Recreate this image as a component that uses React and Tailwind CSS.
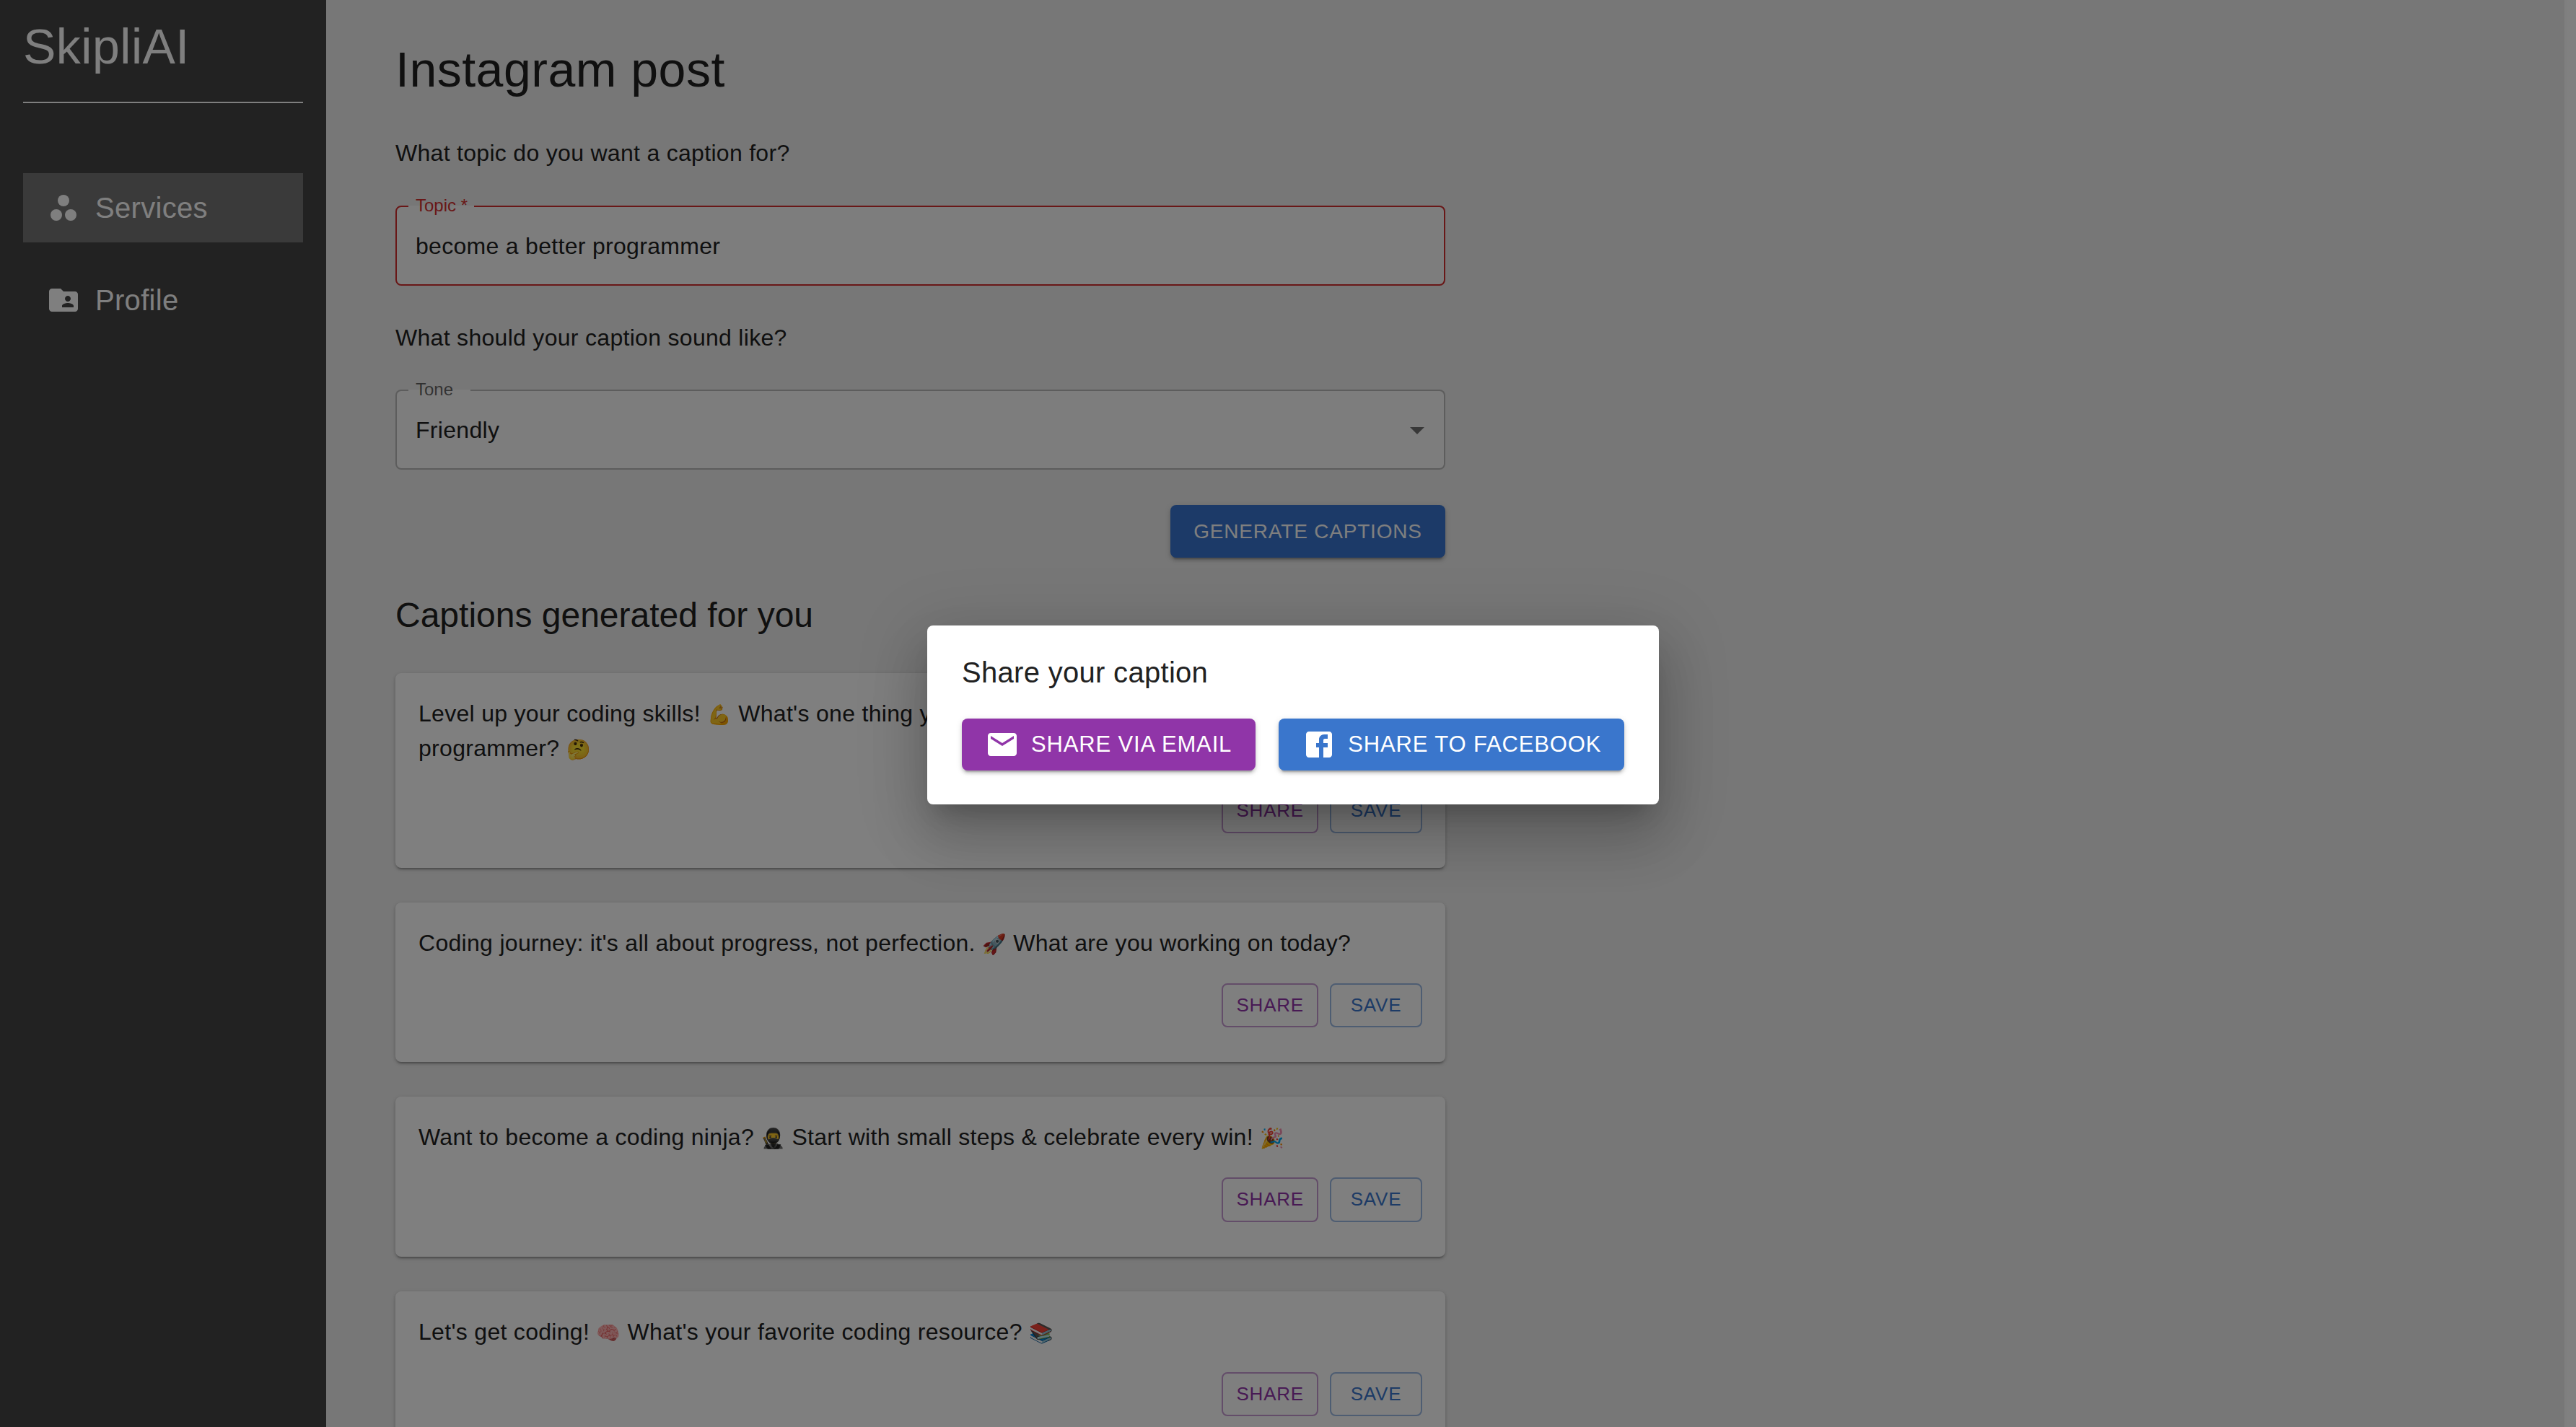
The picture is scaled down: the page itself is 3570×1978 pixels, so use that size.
import React from "react";

const FONT = "font-['Liberation_Sans',Arial,sans-serif]";

const captions = [
  "Level up your coding skills! 💪 What's one thing you're doing today to become a better programmer? 🤔",
  "Coding journey: it's all about progress, not perfection. 🚀 What are you working on today?",
  "Want to become a coding ninja? 🥷 Start with small steps & celebrate every win! 🎉",
  "Let's get coding! 🧠 What's your favorite coding resource? 📚",
];

const WorkspacesIcon = () => (
  <svg viewBox="0 0 24 24" className="w-12 h-12 fill-white">
    <circle cx="12" cy="7" r="4" />
    <circle cx="7" cy="17" r="4" />
    <circle cx="17" cy="17" r="4" />
  </svg>
);

const FolderSharedIcon = () => (
  <svg viewBox="0 0 24 24" className="w-12 h-12 fill-white">
    <path d="M20 6h-8l-2-2H4c-1.1 0-1.99.9-1.99 2L2 18c0 1.1.9 2 2 2h16c1.1 0 2-.9 2-2V8c0-1.1-.9-2-2-2zm-5 3c1.1 0 2 .9 2 2s-.9 2-2 2-2-.9-2-2 .9-2 2-2zm4 8h-8v-1c0-1.33 2.67-2 4-2s4 .67 4 2v1z" />
  </svg>
);

const EmailIcon = () => (
  <svg viewBox="0 0 24 24" className="w-12 h-12 fill-white">
    <path d="M20 4H4c-1.1 0-1.99.9-1.99 2L2 18c0 1.1.9 2 2 2h16c1.1 0 2-.9 2-2V6c0-1.1-.9-2-2-2zm0 4l-8 5-8-5V6l8 5 8-5v2z" />
  </svg>
);

const FacebookIcon = () => (
  <svg viewBox="0 0 24 24" className="w-12 h-12 fill-white">
    <path d="M19 3H5c-1.1 0-2 .9-2 2v14c0 1.1.9 2 2 2h7v-7h-2v-3h2V8.5C12 6.57 13.57 5 15.5 5H18v3h-2c-.55 0-1 .45-1 1v2h3v3h-3v7h4c1.1 0 2-.9 2-2V5c0-1.1-.9-2-2-2z" />
  </svg>
);

// the colour emoji font runs wider than the one in the screenshot, so emojis get a smaller size
const withEmoji = (text) =>
  text.split(/(\p{Extended_Pictographic})/u).map((part, i) =>
    i % 2 === 1 ? (
      <span key={i} className="text-[27px] leading-none tracking-normal">
        {part}
      </span>
    ) : (
      part
    )
  );

const CaptionCard = ({ text }) => (
  <div className="bg-white rounded-lg px-8 pt-8 pb-12 shadow-[0_4px_2px_-2px_rgba(0,0,0,0.2),0_2px_4px_0_rgba(0,0,0,0.14),0_2px_6px_0_rgba(0,0,0,0.12)]">
    <p className="text-[32px] leading-[48px] tracking-[0.3px] text-[#212121]">{withEmoji(text)}</p>
    <div className="flex justify-end gap-4 mt-8">
      <button className="h-[61.5px] px-[18px] min-w-[128px] rounded-lg border-2 border-[#9035a8]/50 text-[#9035a8] text-[26px] tracking-[0.8px]">
        SHARE
      </button>
      <button className="h-[61.5px] px-[18px] min-w-[128px] rounded-lg border-2 border-[#3a76cc]/50 text-[#3a76cc] text-[26px] tracking-[0.8px]">
        SAVE
      </button>
    </div>
  </div>
);

export default function App() {
  return (
    <div className={`${FONT} relative flex h-screen overflow-hidden bg-[#eeeeee]`}>
      <aside className="w-[452px] shrink-0 bg-[#444444] px-8 text-white">
        <div className="h-[143px] pt-6 border-b-2 border-white text-[68px] leading-[80px] tracking-[0.5px]">SkipliAI</div>
        <nav className="flex flex-col gap-8 mt-[97px]">
          <div className="flex items-center gap-5 h-24 pl-8 bg-[#747474] text-[40px] tracking-[0.3px]">
            <WorkspacesIcon />
            <span>Services</span>
          </div>
          <div className="flex items-center gap-5 h-24 pl-8 text-[40px] tracking-[0.3px]">
            <FolderSharedIcon />
            <span>Profile</span>
          </div>
        </nav>
      </aside>

      <main className="w-[1455px] ml-24 shrink-0 pt-[50px] text-[#212121]">
        <h1 className="text-[68px] leading-[92px] tracking-[0.5px]">Instagram post</h1>
        <p className="text-[32px] leading-[48px] tracking-[0.3px] mt-[46px]">What topic do you want a caption for?</p>

        <div className="relative mt-[49px] h-[111px] rounded-lg border-2 border-[#d32f2f] bg-[#fafafa] flex items-center px-[26px] text-[32px] tracking-[0.3px]">
          <span className="absolute -top-[15px] left-4 w-[91px] pl-[10px] bg-[linear-gradient(#eeeeee_50%,#fafafa_50%)] text-[24px] leading-[26px] tracking-normal text-[#d32f2f]">Topic *</span>
          become a better programmer
        </div>

        <p className="text-[32px] leading-[48px] tracking-[0.3px] mt-[48px]">What should your caption sound like?</p>

        <div className="relative mt-[48px] h-[111px] rounded-lg border-2 border-black/25 bg-[#fafafa] flex items-center justify-between px-[26px] text-[32px] tracking-[0.3px]">
          <span className="absolute -top-[15px] left-4 w-[86px] pl-[10px] bg-[linear-gradient(#eeeeee_50%,#fafafa_50%)] text-[24px] leading-[26px] tracking-normal text-black/60">Tone</span>
          Friendly
          <svg viewBox="0 0 24 24" className="w-12 h-12 -mr-[13px] fill-black/55">
            <path d="M7 10l5 5 5-5z" />
          </svg>
        </div>

        <div className="flex justify-end mt-[49px]">
          <button className="h-[73px] w-[381px] rounded-lg bg-[#3874d0] text-white text-[28px] tracking-[0.8px] shadow-[0_6px_2px_-4px_rgba(0,0,0,0.2),0_4px_4px_0_rgba(0,0,0,0.14),0_2px_10px_0_rgba(0,0,0,0.12)]">
            GENERATE CAPTIONS
          </button>
        </div>

        <h2 className="text-[48px] leading-[64px] mt-[48px]">Captions generated for you</h2>

        <div className="flex flex-col gap-12 mt-[48px]">
          {captions.map((text) => (
            <CaptionCard key={text} text={text} />
          ))}
        </div>
      </main>

      <div className="ml-auto w-4 shrink-0 bg-white" />

      <div className="absolute inset-0 bg-black/50" />

      <div className="absolute left-[1285px] top-[867px] w-[1014px] h-[248px] bg-white rounded-lg p-12 shadow-[0_22px_30px_-14px_rgba(0,0,0,0.2),0_48px_76px_6px_rgba(0,0,0,0.14),0_18px_92px_16px_rgba(0,0,0,0.12)]">
        <h2 className="text-[40px] leading-[40px] tracking-[0.3px] -mt-[3px] text-[#212121]">Share your caption</h2>
        <div className="flex gap-8 mt-[44px]">
          <button className="flex items-center shrink-0 whitespace-nowrap h-[72px] pl-8 pr-[33px] rounded-lg bg-[#9035a8] text-white text-[31px] tracking-[0.86px] shadow-[0_6px_2px_-4px_rgba(0,0,0,0.2),0_4px_4px_0_rgba(0,0,0,0.14),0_2px_10px_0_rgba(0,0,0,0.12)]">
            <EmailIcon />
            <span className="ml-4">SHARE VIA EMAIL</span>
          </button>
          <button className="flex items-center shrink-0 whitespace-nowrap h-[72px] pl-8 pr-[32px] rounded-lg bg-[#3a76cc] text-white text-[31px] tracking-[0.86px] shadow-[0_6px_2px_-4px_rgba(0,0,0,0.2),0_4px_4px_0_rgba(0,0,0,0.14),0_2px_10px_0_rgba(0,0,0,0.12)]">
            <FacebookIcon />
            <span className="ml-4">SHARE TO FACEBOOK</span>
          </button>
        </div>
      </div>
    </div>
  );
}
